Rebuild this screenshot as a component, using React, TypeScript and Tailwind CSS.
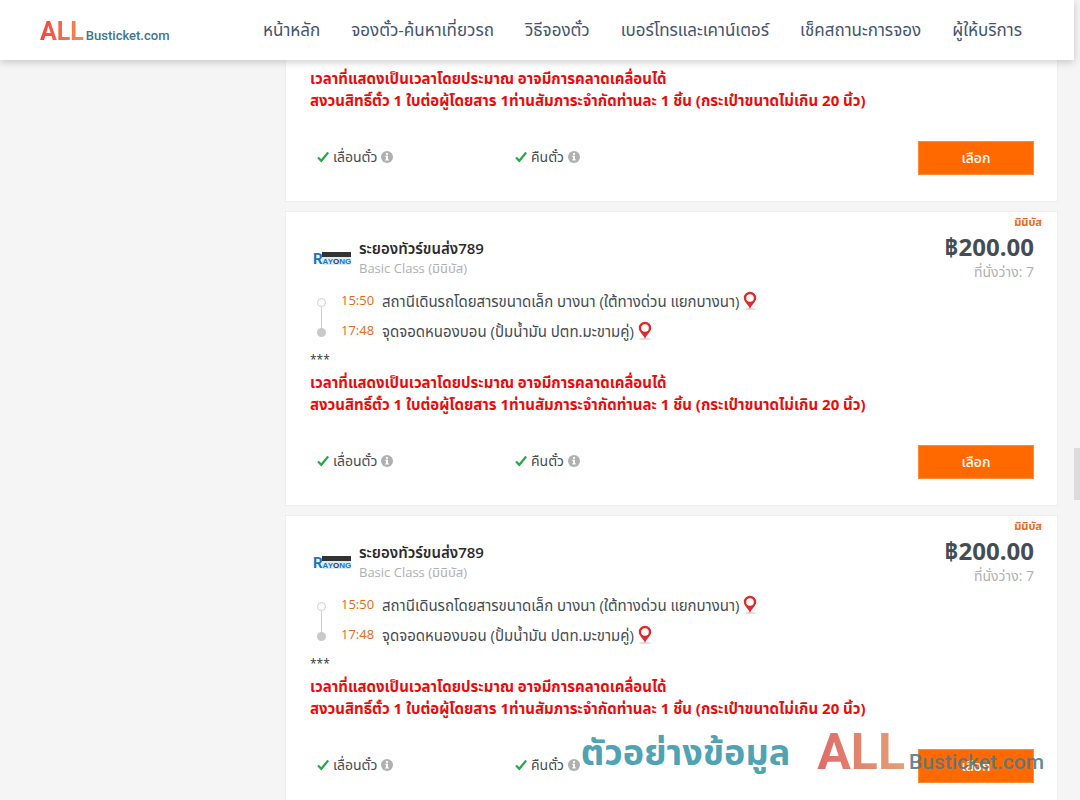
import React from "react";

interface Stop {
    time: string;
    place: string;
}

interface Trip {
    id: number;
    company: string;
    busClass: string;
    type: string;
    price: string;
    seats: number;
    stops: Stop[];
}

const menu = [
    "หน้าหลัก",
    "จองตั๋ว-ค้นหาเที่ยวรถ",
    "วิธีจองตั๋ว",
    "เบอร์โทรและเคาน์เตอร์",
    "เช็คสถานะการจอง",
    "ผู้ให้บริการ",
];

const baseTrip = {
    company: "ระยองทัวร์ขนส่ง789",
    busClass: "Basic Class (มินิบัส)",
    type: "มินิบัส",
    price: "฿200.00",
    seats: 7,
    stops: [
        {
            time: "15:50",
            place: "สถานีเดินรถโดยสารขนาดเล็ก บางนา (ใต้ทางด่วน แยกบางนา)",
        },
        { time: "17:48", place: "จุดจอดหนองบอน (ปั้มน้ำมัน ปตท.มะขามคู่)" },
    ],
};

const trips: Trip[] = [
    { id: 2, ...baseTrip },
    { id: 3, ...baseTrip },
];

const RayongLogo: React.FC = () => (
    <svg width="38" height="20" viewBox="0 0 38 20" aria-label="Rayong">
        <rect x="9" y="4" width="29" height="5" fill="#333" />
        <rect x="9" y="9" width="29" height="8" fill="#dcecf6" />
        <text
            x="0"
            y="16"
            fill="#1577bd"
            fontFamily="Liberation Sans, sans-serif"
            fontWeight="700"
            fontSize="8"
        >
            <tspan fontSize="15" fontFamily="Roboto, sans-serif">R</tspan>
            <tspan>AY</tspan>
            <tspan fill="#3a3033">O</tspan>
            <tspan>NG</tspan>
        </text>
    </svg>
);

const Pin: React.FC = () => (
    <svg width="14" height="20" viewBox="0 0 14 20" aria-hidden="true">
        <ellipse cx="7" cy="18" rx="6" ry="1.2" fill="#dcdcdc" />
        <path
            fill="#dc2a2e"
            fillRule="evenodd"
            d="M7 .8a6.200 6.200 0 0 0-6.200 6.200c0 3.600 4 6 6.200 10.800C9.200 13 13.200 10.600 13.200 7A6.200 6.200 0 0 0 7 .8Zm0 2.400a3.800 3.800 0 1 1 0 7.600A3.800 3.800 0 0 1 7 3.200Z"
        />
    </svg>
);

const Check: React.FC = () => (
    <svg width="12" height="12" viewBox="0 0 12 12" aria-hidden="true">
        <path
            d="M1 6.500 4.300 9.800 11.200 1.500"
            fill="none"
            stroke="#28a745"
            strokeWidth="2.200"
        />
    </svg>
);

const Info: React.FC = () => (
    <svg width="12" height="12" viewBox="0 0 12 12" aria-hidden="true">
        <circle cx="6" cy="6" r="6" fill="#b0b0b0" />
        <path
            d="M5 2h2v1.800H5ZM4.400 4.800H7V8.300h.7v1.300H4.300V8.300H5V6H4.400Z"
            fill="#fff"
        />
    </svg>
);

const Policy: React.FC<{ label: string }> = ({ label }) => (
    <div className="flex w-[198px] items-center gap-1 text-sm text-[#444b52]">
        <Check />
        <span>{label}</span>
        <Info />
    </div>
);

const Notice: React.FC = () => (
    <div className="pl-6 text-[15px] leading-[22px] font-bold text-[#e80c0c]">
        <p>เวลาที่แสดงเป็นเวลาโดยประมาณ อาจมีการคลาดเคลื่อนได้</p>
        <p>
            สงวนสิทธิ์ตั๋ว 1 ใบต่อผู้โดยสาร 1ท่านสัมภาระจำกัดท่านละ 1 ชิ้น
            (กระเป๋าขนาดไม่เกิน 20 นิ้ว)
        </p>
    </div>
);

const CardFooter: React.FC = () => (
    <div className="flex h-[90px] items-start pt-[30px] pr-[23px] pl-[31px]">
        <div className="flex h-8 flex-1 items-center">
            <Policy label="เลื่อนตั๋ว" />
            <Policy label="คืนตั๋ว" />
        </div>
        <button
            type="button"
            className="h-[34px] w-[116px] border border-[#ff8c33] bg-[#ff6900] text-sm font-medium text-white"
        >
            เลือก
        </button>
    </div>
);

const TripCard: React.FC<{ trip: Trip }> = ({ trip }) => (
    <article className="shrink-0 border border-[#eceeee] bg-white">
        <p className="h-5 pr-[15px] text-right text-[11px] leading-5 font-bold text-[#e8691a]">
            {trip.type}
        </p>
        <div className="flex h-12 justify-between pr-[23px] pl-[27px]">
            <div className="flex items-center gap-2 pt-1">
                <RayongLogo />
                <div>
                    <h3 className="text-[15px] leading-5 font-semibold text-[#2b2b2b]">
                        {trip.company}
                    </h3>
                    <p className="text-[13px] leading-5 text-[#b0b0b0]">
                        {trip.busClass}
                    </p>
                </div>
            </div>
            <div className="text-right">
                <p className="text-2xl leading-[30px] font-bold text-[#454d54]">
                    {trip.price}
                </p>
                <p className="text-sm leading-5 text-[#b0b0b0]">
                    ที่นั่งว่าง: {trip.seats}
                </p>
            </div>
        </div>
        <div className="flex pt-[6px] pl-[31px]">
            <div className="flex w-[24px] flex-col items-start pt-3">
                <span className="size-[9px] rounded-full border border-[#d0d0d0]" />
                <span className="ml-1 h-[21px] w-px bg-[#d0d0d0]" />
                <span className="size-[9px] rounded-full bg-[#c9c9c9]" />
            </div>
            <ul>
                {trip.stops.map((stop) => (
                    <li key={stop.time} className="flex h-[30px] items-center">
                        <span className="w-[41px] text-[13px] text-[#e8691a]">
                            {stop.time}
                        </span>
                        <span className="mr-1 text-[15px] text-[#444b52]">
                            {stop.place}
                        </span>
                        <Pin />
                    </li>
                ))}
            </ul>
        </div>
        <p className="pt-[3px] pl-6 text-xs leading-[22px] text-[#333]">***</p>
        <Notice />
        <CardFooter />
    </article>
);

const App: React.FC = () => {
    return (
        <div className="relative flex h-screen overflow-hidden bg-[#f5f5f5] font-['Open_Sans','Noto_Sans_Thai',sans-serif]">
            <div className="flex min-w-0 flex-1 flex-col">
                <header className="z-10 flex h-[60px] shrink-0 items-center bg-white pr-[52px] pl-10 shadow-[0_2px_8px_rgba(0,0,0,0.2)]">
                    <a
                        href="#"
                        className="flex w-[223px] items-baseline gap-0.5 pt-1 font-['Roboto',sans-serif]"
                    >
                        <span className="bg-linear-to-r from-[#f5403c] to-[#f58a55] bg-clip-text text-[25px] font-bold text-transparent">
                            ALL
                        </span>
                        <span className="text-[13px] font-medium text-[#3a7592]">
                            Busticket.com
                        </span>
                    </a>
                    <nav className="flex flex-1 justify-between text-[17px] whitespace-nowrap text-[#44546f]">
                        {menu.map((item) => (
                            <a key={item} href="#">
                                {item}
                            </a>
                        ))}
                    </nav>
                </header>
                <main className="flex flex-1 flex-col gap-[9px] overflow-hidden pr-4 pl-[285px]">
                    <article className="shrink-0 border border-t-0 border-[#eceeee] bg-white pt-[7px]">
                        <Notice />
                        <CardFooter />
                    </article>
                    {trips.map((trip) => (
                        <TripCard key={trip.id} trip={trip} />
                    ))}
                </main>
            </div>
            <div className="w-[6px] pt-[448px]">
                <div className="h-[52px] bg-[#dcdcdc]" />
            </div>
            <div className="pointer-events-none absolute right-9 bottom-0 flex items-end font-['Roboto','Noto_Sans_Thai',sans-serif] whitespace-nowrap">
                <span className="mr-[27px] pb-5 text-[36px] font-bold text-[#4fa3b3]">
                    ตัวอย่างข้อมูล
                </span>
                <div className="flex items-baseline gap-1 pb-[10px]">
                    <span className="bg-linear-to-r from-[#df6a68] to-[#e3a075] bg-clip-text text-[50px] font-bold text-transparent">
                        ALL
                    </span>
                    <span className="text-[21px] font-medium text-[#4d788c]/90">
                        Busticket.com
                    </span>
                </div>
            </div>
        </div>
    );
};

export default App;
